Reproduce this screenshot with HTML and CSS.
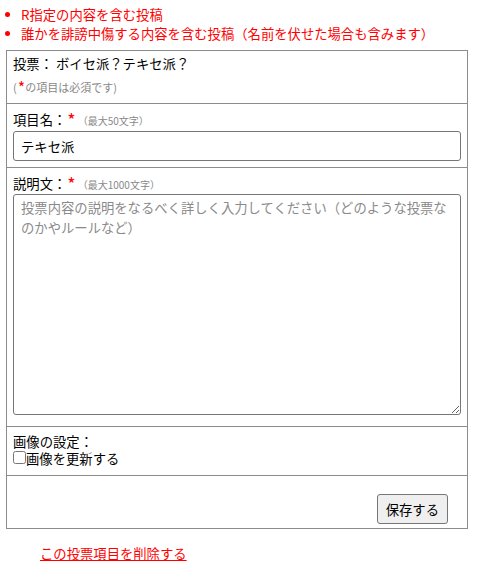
FILE: index.html
```html
<!DOCTYPE html>
<html>
<head>
    <title>投票項目の編集</title>
    <link rel="stylesheet" href="styles.css">
</head>
<body>
    <ul class="rules">
        <li>R指定の内容を含む投稿</li>
        <li>誰かを誹謗中傷する内容を含む投稿（名前を伏せた場合も含みます）</li>
    </ul>

    <form class="edit-box">
        <div class="row row-head">
            <div class="vote-title">投票： ボイセ派？テキセ派？</div>
            <div class="note">(<span class="req">*</span>の項目は必須です)</div>
        </div>

        <div class="row">
            <label class="field-label" for="itemName">項目名：<span class="req">*</span><span class="limit">（最大50文字）</span></label>
            <input type="text" id="itemName" class="text-input" value="テキセ派">
        </div>

        <div class="row row-desc">
            <label class="field-label" for="itemDesc">説明文：<span class="req">*</span><span class="limit">（最大1000文字）</span></label>
            <textarea id="itemDesc" class="text-area" placeholder="投票内容の説明をなるべく詳しく入力してください（どのような投票なのかやルールなど）"></textarea>
        </div>

        <div class="row row-image">
            <div class="line">画像の設定：</div>
            <label class="check-line"><input type="checkbox" class="check">画像を更新する</label>
        </div>

        <div class="row row-submit">
            <button type="submit" class="btn-save">保存する</button>
        </div>
    </form>

    <p class="delete"><a href="#">この投票項目を削除する</a></p>
</body>
</html>
```

FILE: styles.css
```css
body { margin: 0; font-family: "Noto Sans CJK JP", "Noto Sans", sans-serif; font-size: 13.33px; color: #000; background: #fff; }

.rules { list-style: none; margin: 5px 0 0; padding: 0; color: #f00; }
.rules li { display: flex; align-items: center; line-height: 19px; }
.rules li::before { content: ""; width: 5px; height: 5px; border-radius: 50%; background: #f00; margin: 0 11px 0 5px; flex: none; }

.edit-box { margin: 7px 10px 0 6px; border: 1px solid #8c8c8c; }
.row { padding: 6px 6px; border-top: 1px solid #8c8c8c; }
.row:first-child { border-top: none; }

.row-head { padding: 3px 6px 7px; }
.vote-title { line-height: 20px; }
.note { color: #888; font-size: 11px; line-height: 18px; margin-top: 4px; }
.note .req { font-size: 16px; }

.req { color: #f00; font-size: 18px; line-height: 0; margin-left: 1px; position: relative; top: 2px; }
.field-label { display: block; line-height: 20px; }
.limit { color: #888; font-size: 10px; line-height: 0; margin-left: 2px; }

.text-input { display: block; box-sizing: border-box; width: 100%; height: 30px; margin: 1px 0 0; padding: 0 7px; border: 1px solid #767676; border-radius: 3px; font: inherit; color: #000; }

.row-desc { padding-bottom: 11px; }
.text-area { display: block; box-sizing: border-box; width: 100%; height: 221px; margin: 0; padding: 3px 7px; border: 1px solid #767676; border-radius: 3px; font: inherit; line-height: 20px; resize: vertical; }
.text-area::placeholder { color: #8a8a8a; }

.row-image { padding: 6px 6px 8px; line-height: 17px; }
.check-line { display: flex; align-items: flex-start; }
.check { width: 13px; height: 13px; margin: 1px 0 0; }

.row-submit { padding: 18px 19px 4px; text-align: right; }
.btn-save { height: 30px; padding: 0 8px; font: inherit; color: #000; background: #efefef; border: 1px solid #767676; border-radius: 3px; }

.delete { margin: 15px 0 0 40px; line-height: 19px; }
.delete a { color: #f00; }
```
